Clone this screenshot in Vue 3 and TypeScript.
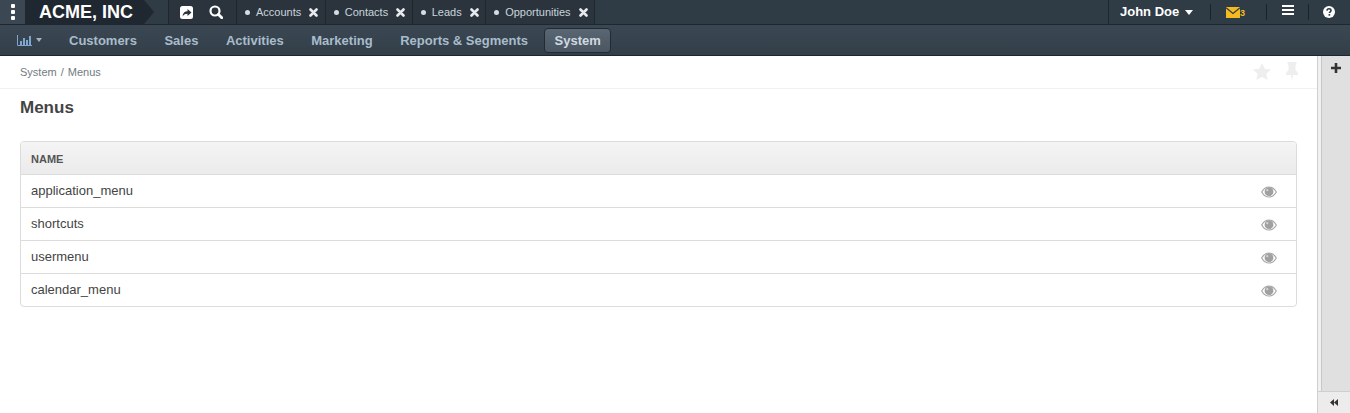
<template>
  <div class="app">
    <header class="top-bar">
      <button class="dots" aria-label="menu"><i></i><i></i><i></i></button>
      <div class="logo">ACME, INC</div>
      <div class="quick">
        <svg width="13" height="13" viewBox="0 0 13 13">
          <rect width="13" height="13" rx="2.500" fill="#fff" />
          <path d="M2.500 10.500C2.700 7 4.800 5.200 7.500 5.200V3l4 3.500-4 3.500V7.800C5.500 7.800 3.800 8.500 2.500 10.500z" fill="#2b343c" />
        </svg>
        <svg width="14" height="14" viewBox="0 0 14 14">
          <circle cx="6" cy="6" r="4.500" fill="none" stroke="#fff" stroke-width="2.200" />
          <path d="M9.500 9.500L12.800 12.800" stroke="#fff" stroke-width="2.800" stroke-linecap="round" />
        </svg>
      </div>
      <ul class="tabs">
        <li v-for="tab in tabs" :key="tab" class="tab">
          <span class="bullet"></span>
          <span class="tab-name">{{ tab }}</span>
          <svg class="tab-close" width="9" height="9" viewBox="0 0 9 9">
            <path d="M1.500 1.500l6 6M7.500 1.500l-6 6" stroke="#e6eaee" stroke-width="2.600" stroke-linecap="round" />
          </svg>
        </li>
      </ul>
      <div class="top-right">
        <div class="user">John Doe<span class="caret"></span></div>
        <div class="mail">
          <svg width="14" height="11" viewBox="0 0 14 11">
            <rect width="14" height="11" fill="#f5b921" />
            <path d="M0 .8l7 5.700L14 .8" fill="none" stroke="#2e3a44" stroke-width="1.200" />
          </svg>
          <span class="mail-count">3</span>
        </div>
        <div class="bars"><i></i><i></i><i></i></div>
        <div class="help">
          <svg width="12" height="12" viewBox="0 0 13 13">
            <circle cx="6.500" cy="6.500" r="6.500" fill="#fff" />
            <path d="M4.300 5C4.400 3.700 5.300 3 6.500 3c1.300 0 2.200.8 2.200 1.800 0 1.500-1.800 1.400-1.800 2.900" fill="none" stroke="#2e3a44" stroke-width="1.700" />
            <rect x="6" y="8.700" width="1.800" height="1.800" fill="#2e3a44" />
          </svg>
        </div>
      </div>
    </header>

    <nav class="main-nav">
      <div class="nav-chart">
        <svg width="15" height="11" viewBox="0 0 15 11">
          <path d="M.5 0v10.500H15" fill="none" stroke="#7fa6cf" />
          <path d="M3 6h2v4H3zM6 3h2v7H6zM9 5h2v5H9zM12 1h2v9h-2z" fill="#7fa6cf" />
        </svg>
        <span class="nav-caret"></span>
      </div>
      <a v-for="item in navItems" :key="item" class="nav-item" :class="{ active: item === 'System' }">{{ item }}</a>
    </nav>

    <div class="body">
      <main class="content">
        <div class="crumbs">
          <span>System<span class="sep">/</span>Menus</span>
          <div class="crumb-icons">
            <svg width="18" height="17" viewBox="0 0 18 17">
              <path d="M9 0l2.700 5.700 6.300.8-4.600 4.300 1.200 6.200L9 14l-5.600 3 1.200-6.200L0 6.500l6.300-.8z" fill="#eeeeee" />
            </svg>
            <svg width="14" height="19" viewBox="0 0 14 19">
              <path d="M2.500 0h9v1.500L10.500 3v5l2.500 3v2H8L7 19l-1-6H1v-2l2.500-3V3l-1-1.500z" fill="#eeeeee" />
            </svg>
          </div>
        </div>
        <h1 class="title">Menus</h1>
        <div class="grid-wrap">
          <table class="grid">
            <thead>
              <tr><th colspan="2">NAME</th></tr>
            </thead>
            <tbody>
              <tr v-for="menu in menus" :key="menu">
                <td>{{ menu }}</td>
                <td class="action">
                  <svg width="16" height="12" viewBox="0 0 16 12">
                    <path d="M.7 6C2.500 2.700 5 1 8 1s5.500 1.700 7.300 5C13.500 9.300 11 11 8 11S2.500 9.300.7 6z" fill="none" stroke="#a8a8a8" stroke-width="1.200" />
                    <circle cx="8" cy="5.700" r="4.400" fill="#a0a0a0" />
                    <circle cx="6.300" cy="4.200" r="1.100" fill="#d5d5d5" />
                  </svg>
                </td>
              </tr>
            </tbody>
          </table>
        </div>
      </main>
      <aside class="side">
        <div class="gutter"></div>
        <div class="side-panel">
          <div class="side-top">
            <svg width="10" height="10" viewBox="0 0 10 10"><path d="M3.700 0h2.600v3.700H10v2.600H6.300V10H3.700V6.300H0V3.700h3.700z" fill="#333" /></svg>
          </div>
        </div>
        <div class="side-foot">
          <svg width="8" height="7" viewBox="0 0 8 7"><path d="M4 0v7L0 3.500zM8 0v7L4 3.500z" fill="#333" /></svg>
        </div>
      </aside>
    </div>
  </div>
</template>

<script setup lang="ts">
const tabs: string[] = ['Accounts', 'Contacts', 'Leads', 'Opportunities']
const navItems: string[] = ['Customers', 'Sales', 'Activities', 'Marketing', 'Reports & Segments', 'System']
const menus: string[] = ['application_menu', 'shortcuts', 'usermenu', 'calendar_menu']
</script>

<style>
html,
body {
  margin: 0;
  background: #fff;
}
</style>

<style scoped>
.app {
  height: 413px;
  display: flex;
  flex-direction: column;
  overflow: hidden;
  font-family: "Liberation Sans", Arial, sans-serif;
  color: #444;
}

.top-bar {
  height: 24px;
  display: flex;
  background: #2f3b45;
  border-bottom: 1px solid #1f272e;
  color: #fff;
}

.dots {
  width: 25px;
  padding: 0;
  border: 0;
  background: #3b4853;
  display: flex;
  flex-direction: column;
  align-items: center;
  justify-content: center;
  gap: 2px;
}

.dots i {
  width: 4px;
  height: 4px;
  background: #fff;
  border-radius: 1px;
}

.logo {
  width: 119px;
  padding-left: 14px;
  box-sizing: border-box;
  background: #1f2830;
  font-size: 18px;
  line-height: 24px;
  font-weight: 700;
  position: relative;
}

.logo::after {
  content: "";
  position: absolute;
  left: 100%;
  top: 0;
  border-left: 10px solid #1f2830;
  border-top: 12px solid transparent;
  border-bottom: 12px solid transparent;
}

.quick {
  margin-left: 24px;
  width: 69px;
  box-sizing: border-box;
  display: flex;
  align-items: center;
  gap: 16px;
  padding-left: 11px;
  background: #2b343c;
  border-left: 1px solid #1f272e;
  border-right: 1px solid #1f272e;
}

.tabs {
  display: flex;
  margin: 0;
  padding: 0;
  list-style: none;
}

.tab {
  display: flex;
  align-items: center;
  height: 24px;
  box-sizing: border-box;
  padding: 0 6.500px 0 8px;
  background: #2b343c;
  border-right: 1px solid #1f272e;
  font-size: 11px;
  color: #c9d4dc;
}

.bullet {
  width: 5px;
  height: 5px;
  border-radius: 50%;
  background: #d4dde3;
  margin-right: 6px;
}

.tab-close {
  margin-left: 8px;
}

.top-right {
  margin-left: auto;
  display: flex;
  width: 242px;
  background: #2f3b45;
  border-left: 1px solid #1f272e;
  box-sizing: border-box;
}

.user {
  width: 101px;
  box-sizing: border-box;
  padding-left: 11px;
  font-size: 13px;
  font-weight: 700;
  line-height: 24px;
  display: flex;
  align-items: center;
  gap: 6px;
}

.caret {
  border-top: 5px solid #fff;
  border-left: 4.500px solid transparent;
  border-right: 4.500px solid transparent;
}

.mail {
  width: 56px;
  box-sizing: border-box;
  padding-left: 15px;
  display: flex;
  align-items: center;
}

.mail,
.bars,
.help {
  height: 16px;
  margin-top: 4px;
  border-left: 1px solid #1a2127;
}

.mail-count {
  font-size: 9px;
  font-weight: 700;
  color: #f5b921;
  margin-top: 2px;
}

.bars {
  width: 42px;
  box-sizing: border-box;
  padding: 1px 0 0 15px;
  display: flex;
  flex-direction: column;
  gap: 2px;
}

.bars i {
  width: 12px;
  height: 2px;
  background: #fff;
}

.help {
  flex: 1;
  padding-left: 14px;
  display: flex;
  align-items: center;
}

.main-nav {
  height: 30px;
  display: flex;
  align-items: center;
  background: linear-gradient(#3b4853, #323e48);
  border-bottom: 1px solid #1f272e;
}

.nav-chart {
  width: 69px;
  box-sizing: border-box;
  padding-left: 17px;
  display: flex;
  align-items: center;
  gap: 4px;
}

.nav-caret {
  border-top: 4px solid #9fb3c5;
  border-left: 3.500px solid transparent;
  border-right: 3.500px solid transparent;
}

.nav-item {
  font-size: 13px;
  font-weight: 700;
  color: #a9bccb;
  margin-right: 27.500px;
}

.nav-item.active {
  margin: 0 0 0 -12px;
  padding: 0 9.500px 0 10px;
  height: 25px;
  line-height: 23px;
  background: linear-gradient(#596673, #4a5762);
  border: 1px solid #222b32;
  border-radius: 4px;
  box-sizing: border-box;
  color: #cfd9e1;
}

.body {
  flex: 1;
  display: flex;
  min-height: 0;
}

.content {
  flex: 1;
  min-width: 0;
}

.crumbs {
  height: 33px;
  box-sizing: border-box;
  padding: 0 18px 0 20px;
  display: flex;
  align-items: center;
  justify-content: space-between;
  border-bottom: 1px solid #f1f1f1;
  font-size: 11px;
  color: #727a81;
}

.sep {
  margin: 0 4px;
}

.crumb-icons {
  display: flex;
  align-items: center;
  gap: 14px;
  margin-bottom: 2px;
}

.title {
  margin: 0;
  padding: 9px 20px 0;
  font-size: 17px;
  line-height: 20px;
  font-weight: 700;
  color: #444;
}

.grid-wrap {
  margin: 23px 20px 0;
  border: 1px solid #dcdcdc;
  border-radius: 4px;
  overflow: hidden;
}

.grid {
  width: 100%;
  border-collapse: collapse;
  font-size: 13px;
}

.grid th {
  height: 32px;
  padding: 3px 10px 0;
  box-sizing: border-box;
  text-align: left;
  font-size: 11px;
  font-weight: 700;
  color: #555;
  background: linear-gradient(#f4f4f4, #ebebeb);
}

.grid td {
  height: 33px;
  padding: 0 10px;
  box-sizing: border-box;
  border-top: 1px solid #dcdcdc;
  color: #444;
}

.grid .action {
  width: 36px;
  padding: 0 18px 0 0;
}

.grid .action svg {
  display: block;
  margin: 2px auto 0;
}

.side {
  width: 33px;
  position: relative;
  display: flex;
  flex-direction: column;
  background: #f1f1f1;
  border-left: 1px solid #cfcfcf;
  box-sizing: border-box;
}

.gutter {
  position: absolute;
  left: 0;
  top: 0;
  bottom: 22px;
  width: 3px;
  background: #f1f1f1;
  border-right: 1px solid #c8c8c8;
}

.side-panel {
  flex: 1;
  margin-left: 4px;
  background: #e0e0e0;
}

.side-top {
  height: 24px;
  display: flex;
  align-items: center;
  justify-content: center;
}

.side-foot {
  height: 21px;
  background: #ececec;
  border-top: 1px solid #cfcfcf;
  display: flex;
  align-items: center;
  justify-content: center;
}
</style>
